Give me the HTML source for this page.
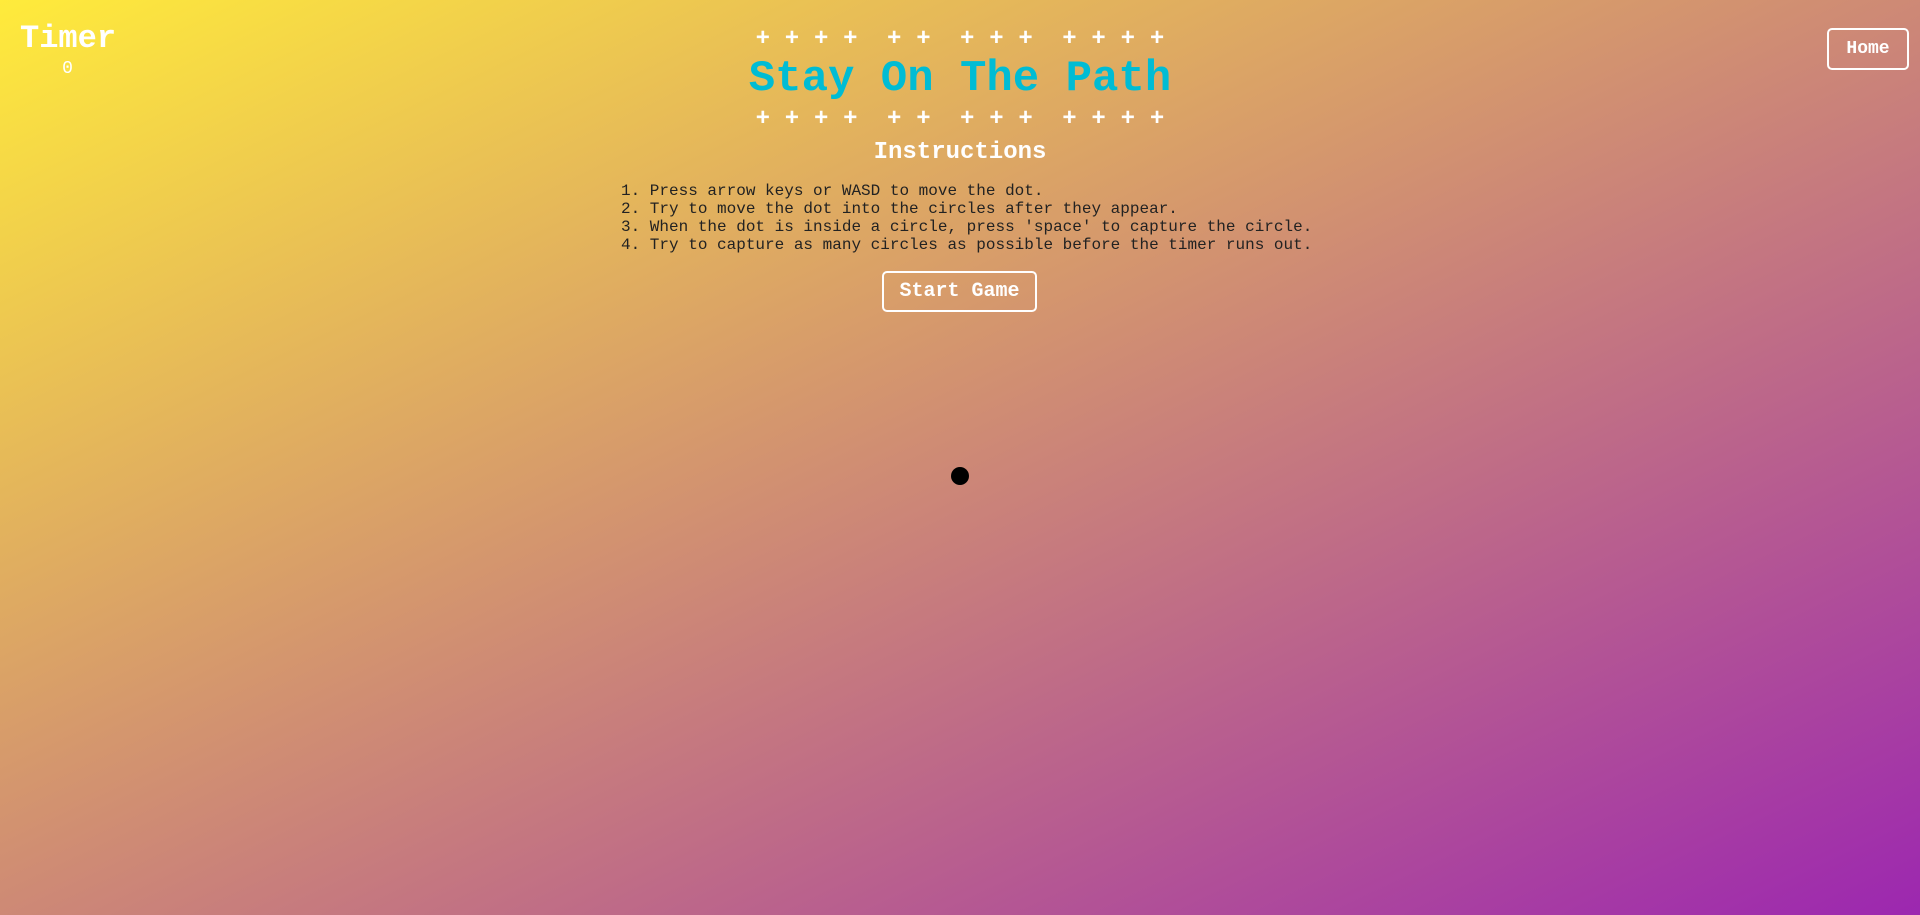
<!DOCTYPE html>
<html><head><meta charset="utf-8"><style>
html,body{margin:0;padding:0}
body{width:1920px;height:915px;overflow:hidden;position:relative;
background:linear-gradient(to bottom right,#ffeb3b,#9c27b0);
font-family:"Courier New","Liberation Mono",monospace;color:#fff}
.abs{position:absolute}
#timer{left:20px;top:19px;width:95px;text-align:center;font-weight:bold;font-size:32px;line-height:40px}
#timer .v{font-size:18px;font-weight:normal;line-height:20px;margin-top:0px}
#home{left:1827px;top:28px;width:78px;height:38px;border:2px solid #fff;border-radius:5px;font-weight:bold;font-size:18px;line-height:38px;text-align:center}
.plus{left:0;width:1920px;text-align:center;font-size:24px;font-weight:bold;white-space:pre;line-height:28px;letter-spacing:0.2px}
#title{left:0;width:1920px;text-align:center;top:51px;font-size:44px;font-weight:bold;color:#00bcd4;line-height:56px}
#ins{left:0;width:1920px;text-align:center;top:139px;font-size:24px;font-weight:bold;line-height:28px}
#list{left:621px;top:182px;font-size:16px;line-height:18px;color:#222;white-space:pre}
#start{left:882px;top:271px;width:151px;height:37px;border:2px solid #fff;border-radius:5px;font-weight:bold;font-size:20px;line-height:37px;text-align:center}
#dot{left:951px;top:467px;width:18px;height:18px;border-radius:50%;background:#000}
</style></head><body>
<div id="timer" class="abs">Timer<div class="v">0</div></div>
<div id="home" class="abs">Home</div>
<div class="abs plus" style="top:26px">+ + + +  + +  + + +  + + + +</div>
<div id="title" class="abs">Stay On The Path</div>
<div class="abs plus" style="top:106px">+ + + +  + +  + + +  + + + +</div>
<div id="ins" class="abs">Instructions</div>
<div id="list" class="abs">1. Press arrow keys or WASD to move the dot.
2. Try to move the dot into the circles after they appear.
3. When the dot is inside a circle, press 'space' to capture the circle.
4. Try to capture as many circles as possible before the timer runs out.</div>
<div id="start" class="abs">Start Game</div>
<div id="dot" class="abs"></div>
</body></html>
